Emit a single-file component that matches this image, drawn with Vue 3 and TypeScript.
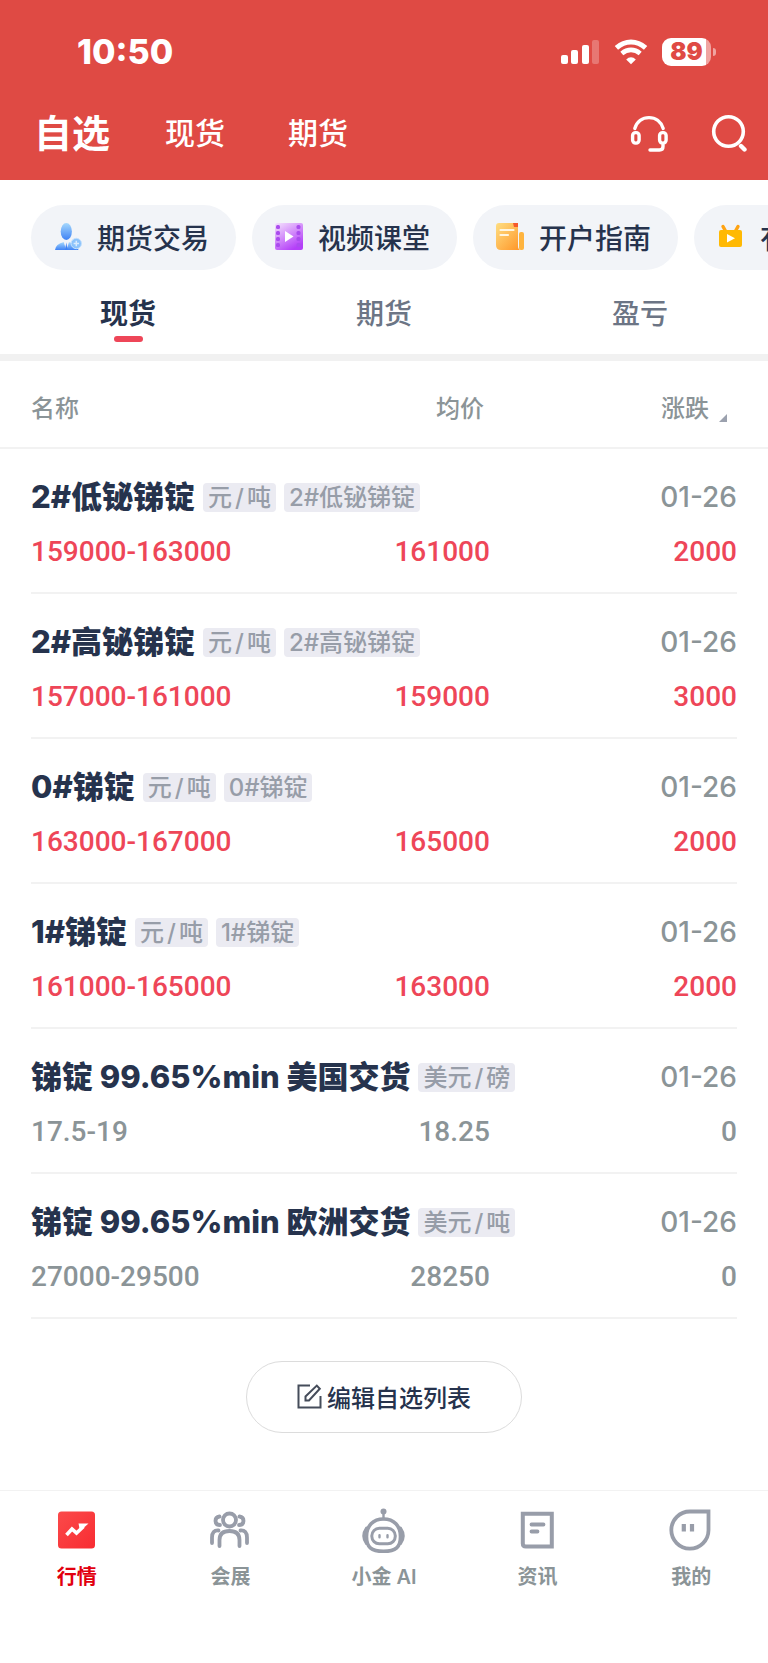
<script setup lang="ts">
import { ref } from 'vue'

interface Quote {
  name: string
  tags: string[][]
  date: string
  range: string
  average: string
  change: string
  up: boolean
}

const sections = ['自选', '现货', '期货']
const section = ref('自选')

const tabs = ['现货', '期货', '盈亏']
const tab = ref('现货')

const chips = [
  { label: '期货交易', icon: 'trade' },
  { label: '视频课堂', icon: 'video' },
  { label: '开户指南', icon: 'guide' },
  { label: '有色直播', icon: 'live' },
]

const quotes: Quote[] = [
  { name: '2#低铋锑锭', tags: [['元', '吨'], ['2#低铋锑锭']], date: '01-26', range: '159000-163000', average: '161000', change: '2000', up: true },
  { name: '2#高铋锑锭', tags: [['元', '吨'], ['2#高铋锑锭']], date: '01-26', range: '157000-161000', average: '159000', change: '3000', up: true },
  { name: '0#锑锭', tags: [['元', '吨'], ['0#锑锭']], date: '01-26', range: '163000-167000', average: '165000', change: '2000', up: true },
  { name: '1#锑锭', tags: [['元', '吨'], ['1#锑锭']], date: '01-26', range: '161000-165000', average: '163000', change: '2000', up: true },
  { name: '锑锭 99.65%min 美国交货', tags: [['美元', '磅']], date: '01-26', range: '17.5-19', average: '18.25', change: '0', up: false },
  { name: '锑锭 99.65%min 欧洲交货', tags: [['美元', '吨']], date: '01-26', range: '27000-29500', average: '28250', change: '0', up: false },
]

const navItems = [
  { label: '行情', icon: 'market' },
  { label: '会展', icon: 'expo' },
  { label: '小金 AI', icon: 'robot' },
  { label: '资讯', icon: 'news' },
  { label: '我的', icon: 'mine' },
]
const current = ref('行情')
</script>

<template>
  <div class="page">
    <header class="top">
      <div class="status">
        <time class="clock">10:50</time>
        <div class="signals">
          <svg width="39" height="26" viewBox="0 0 39 26" fill="#fff" aria-hidden="true">
            <rect x="0" y="16" width="7" height="9" rx="2" />
            <rect x="10" y="11" width="7" height="14" rx="2" />
            <rect x="21" y="6" width="7" height="19" rx="2" />
            <rect x="31" y="1" width="7" height="24" rx="2" opacity=".25" />
          </svg>
          <svg width="34" height="26" viewBox="0 0 34 26" fill="none" stroke="#fff" aria-hidden="true">
            <path d="M2.400 8.900Q9 3 17 3t14.600 5.900" stroke-width="5" />
            <path d="M7.800 14.400Q12 10.900 17 10.900t9.200 3.500" stroke-width="4.600" />
            <path d="M17 25.200 12.200 20.400Q14.400 18.200 17 18.200t4.800 2.200Z" fill="#fff" stroke="none" />
          </svg>
          <span class="battery"><b class="level">89</b></span>
        </div>
      </div>
      <div class="bar">
        <nav class="sections">
          <button v-for="s in sections" :key="s" type="button" :class="{ active: s === section }" @click="section = s">{{ s }}</button>
        </nav>
        <div class="actions">
          <button type="button" aria-label="客服">
            <svg width="38" height="38" viewBox="0 0 38 38" fill="none" stroke="#fff" stroke-width="3.400" stroke-linecap="round" aria-hidden="true">
              <path d="M4.800 14.500C7 7.500 12.500 3.600 19 3.600S31 7.500 33.200 14.500" />
              <rect x="2.600" y="18.600" width="6.500" height="10.500" rx="3" />
              <rect x="29.600" y="18.600" width="6.500" height="10.500" rx="3" />
              <path d="M33 31v1.500q0 3.500-3.500 3.500H20" />
            </svg>
          </button>
          <button type="button" aria-label="搜索">
            <svg width="38" height="38" viewBox="0 0 38 38" fill="none" stroke="#fff" aria-hidden="true">
              <circle cx="17.500" cy="17.500" r="14.800" stroke-width="3.600" />
              <path d="m30 32 3.500 3.500" stroke-width="4.400" stroke-linecap="round" />
            </svg>
          </button>
        </div>
      </div>
    </header>

    <main class="content">
      <div class="chips">
        <button v-for="c in chips" :key="c.label" type="button" class="chip">
          <svg width="30" height="30" viewBox="0 0 30 30" aria-hidden="true">
            <defs>
              <linearGradient id="blue" x1="0" y1="0" x2="0" y2="1"><stop offset="0" stop-color="#a5d8fd" /><stop offset="1" stop-color="#3f82f5" /></linearGradient>
              <linearGradient id="violet" x1="0" y1="0" x2=".6" y2="1"><stop offset="0" stop-color="#f5e3fd" /><stop offset="1" stop-color="#b43ff8" /></linearGradient>
              <linearGradient id="orange" x1="0" y1="0" x2="1" y2="1"><stop offset="0" stop-color="#fede82" /><stop offset="1" stop-color="#ff9425" /></linearGradient>
            </defs>
            <g v-if="c.icon === 'trade'">
              <ellipse cx="12.300" cy="9.500" rx="5.600" ry="8.500" fill="url(#blue)" />
              <path d="M1 28q.5-6 9-8h4.500q9.500 2 10 8Z" fill="url(#blue)" />
              <path d="m9.500 19.500 2.800 8.500 2.900-8.500Z" fill="#f2f3f8" />
              <path d="m12.300 20.500-1.300 7.500h2.600Z" fill="#3f82f5" />
              <circle cx="22.300" cy="21.500" r="5.200" fill="#8cc3fb" stroke="#c4e0fd" />
              <path d="M22.300 18.800v5.400M19.600 21.500H25" stroke="#d8ebfe" stroke-width="1.500" />
            </g>
            <g v-else-if="c.icon === 'video'">
              <rect x="0" y="1" width="28" height="27" rx="2" fill="url(#violet)" />
              <g fill="#aa4cee">
                <rect v-for="n in 4" :key="n" x="1" :y="n * 6 - 3" width="4" height="4" rx="1.500" />
                <rect v-for="n in 4" :key="n + 4" x="21.500" :y="n * 6 - 3" width="4" height="4" rx="1.500" />
              </g>
              <path d="M10 9v11l8.500-5.500Z" fill="#fff" />
            </g>
            <g v-else-if="c.icon === 'guide'">
              <path d="M3 1h19v23q0 4 3 4H5q-5 0-5-5V4q0-3 3-3Z" fill="url(#orange)" />
              <rect x="23" y="10" width="5" height="18" rx="2" fill="#ffb43f" />
              <path d="M17 1h5v4h-4Z" fill="#f5592c" />
              <path d="M4.500 8h13M4.500 13h7.500" stroke="#fff5df" stroke-width="2.200" stroke-linecap="round" />
            </g>
            <g v-else>
              <path d="m8.500 9-2.500-4.500M18.500 9l2.500-4.500" stroke="#ffa312" stroke-width="3.400" stroke-linecap="round" />
              <rect x="2" y="8" width="23" height="17" rx="2" fill="#ffb904" />
              <path d="M10 12v8.500l8-4.200Z" fill="#fff" />
            </g>
          </svg>
          {{ c.label }}
        </button>
      </div>

      <nav class="tabs">
        <button v-for="t in tabs" :key="t" type="button" :class="{ active: t === tab }" @click="tab = t">{{ t }}</button>
      </nav>

      <table class="quotes">
        <thead>
          <tr>
            <th scope="col">名称</th>
            <th scope="col">均价</th>
            <th scope="col">
              <button type="button" class="sort">涨跌
                <svg width="8" height="8" viewBox="0 0 8 8" aria-hidden="true"><path d="M8 0v8H0Z" fill="#9ba1ae" /></svg>
              </button>
            </th>
          </tr>
        </thead>
        <tbody v-for="q in quotes" :key="q.name" :class="{ up: q.up }">
          <tr class="title">
            <th scope="rowgroup" colspan="2">
              <span class="name">{{ q.name }}</span>
              <span v-for="(tag, i) in q.tags" :key="i" class="tag">{{ tag[0] }}<template v-if="tag[1]"><span class="per">/</span>{{ tag[1] }}</template></span>
            </th>
            <td class="date">{{ q.date }}</td>
          </tr>
          <tr class="price">
            <td>{{ q.range }}</td>
            <td>{{ q.average }}</td>
            <td>{{ q.change }}</td>
          </tr>
        </tbody>
      </table>

      <button type="button" class="edit">
        <svg width="25" height="25" viewBox="0 0 25 25" fill="none" stroke="#454c5a" stroke-width="2" aria-hidden="true">
          <path d="M13 1.500H1.500v22h22V12" />
          <path d="M8.500 16.500v-4L19.800 1.600l3 3.200L12 16.500Z" />
        </svg>
        编辑自选列表
      </button>
    </main>

    <nav class="dock">
      <a v-for="n in navItems" :key="n.label" href="#" :class="{ active: n.label === current }" @click.prevent="current = n.label">
        <svg width="48" height="48" viewBox="0 0 48 48" fill="none" stroke="#989da9" stroke-width="3.800" stroke-linecap="round" aria-hidden="true">
          <g v-if="n.icon === 'market'" stroke="none">
            <defs><linearGradient id="red" x1="0" y1="0" x2="1" y2="1"><stop offset="0" stop-color="#fb4a4a" /><stop offset="1" stop-color="#f82c32" /></linearGradient></defs>
            <rect x="5" y="5.500" width="37" height="37" rx="3.500" fill="url(#red)" />
            <path d="m13.500 29 5.500-6 4.500 4 7-6.500" fill="none" stroke="#fff" stroke-width="3.600" stroke-linecap="butt" />
            <path d="M25.500 17.500h10l-8.500 7.500Z" fill="#fff" />
          </g>
          <g v-else-if="n.icon === 'expo'">
            <circle cx="23.500" cy="14" r="6.500" />
            <path d="M13.500 10.500q-4 .5-4 4.500t4.500 4M33.500 10.500q4 .5 4 4.500t-4.500 4" />
            <path d="M13.500 40v-6q0-9 10-9t10 9v6" />
            <path d="M12.500 24.500q-6.500-.5-6.500 7V37M34.500 24.500q6.500-.5 6.500 7V37" />
          </g>
          <g v-else-if="n.icon === 'robot'">
            <circle cx="23.500" cy="5.500" r="3" fill="#989da9" stroke="none" />
            <path d="M23.500 6v7" stroke-width="2.400" />
            <path d="M23.500 13C34 13 40.500 20 40.500 30.500S36 45.300 23.500 45.300 6.500 41 6.500 30.500 13 13 23.500 13Z" stroke-width="3.600" />
            <path d="M6.500 22q-5.500 8 0 15.500ZM40.500 22q5.500 8 0 15.500Z" stroke-width="3" fill="#989da9" stroke-linejoin="round" />
            <rect x="11.800" y="22.300" width="23.500" height="15.500" rx="7.500" stroke-width="3" />
            <path d="M19.500 29.200v2M27.500 29.200v2" stroke-width="2.400" />
          </g>
          <g v-else-if="n.icon === 'news'" stroke-linecap="butt">
            <path d="M8.800 7.800h29v32.800h-26q-3 0-3-3Z" stroke-width="4" />
            <path d="M17.500 18.500h12M17.500 25.500h6" stroke-linecap="round" />
          </g>
          <g v-else stroke-linecap="butt">
            <path d="M23 5.500h18.500v18.800A18.600 18.600 0 1 1 23 5.500Z" />
            <path d="M16.800 18v7.500M25 18v7.500" stroke-width="4.200" />
          </g>
        </svg>
        <span>{{ n.label }}</span>
      </a>
    </nav>
  </div>
</template>

<style>
body {
  margin: 0;
  background: #fff;
}
</style>

<style scoped>
.page {
  min-height: 100vh;
  display: flex;
  flex-direction: column;
  overflow-x: hidden;
  color: #26334d;
  font-family: Inter, "Noto Sans CJK SC", sans-serif;
  -webkit-font-smoothing: antialiased;
}

button {
  margin: 0;
  padding: 0;
  border: 0;
  background: none;
  color: inherit;
  font: inherit;
  cursor: pointer;
}

svg {
  display: block;
  flex: none;
}

.top {
  background: #df4a44;
  color: #fff;
}

.status {
  display: flex;
  justify-content: space-between;
  align-items: center;
  padding: 32px 52px 0 77px;
}

.clock {
  font-size: 34px;
  line-height: 40px;
  font-weight: 800;
}

.signals {
  display: flex;
  align-items: center;
  gap: 14px;
}

.battery {
  position: relative;
  display: flex;
  width: 49px;
  height: 28px;
  margin-right: 5px;
  border-radius: 9px;
  background: linear-gradient(to right, #fff 44px, #f0a4a1 44px);
  color: #df4a44;
}

.battery::after {
  content: "";
  position: absolute;
  right: -5px;
  top: 10px;
  width: 3px;
  height: 8px;
  border-radius: 0 4px 4px 0;
  background: #f0a4a1;
}

.level {
  flex: 1;
  font-size: 24px;
  line-height: 28px;
  font-weight: 900;
  text-align: center;
}

.bar {
  display: flex;
  justify-content: space-between;
  align-items: center;
  height: 108px;
  padding: 14px 19px 0 34px;
  box-sizing: border-box;
}

.sections {
  display: flex;
  align-items: center;
  gap: 55px;
}

.sections button {
  font-size: 30px;
  line-height: 52px;
  font-weight: 500;
  padding-right: 8px;
}

.sections .active {
  font-size: 38px;
  font-weight: 700;
  padding: 0;
}

.actions {
  display: flex;
  gap: 43px;
}

.content {
  display: flex;
  flex-direction: column;
}

.chips {
  display: flex;
  gap: 16px;
  padding: 25px 0 0 31px;
  overflow: hidden;
}

.chip {
  flex: none;
  display: flex;
  align-items: center;
  gap: 13px;
  height: 65px;
  padding: 0 27px 2px 23px;
  border-radius: 33px;
  background: #f2f4f8;
  font-size: 28px;
  font-weight: 500;
}

.tabs {
  display: flex;
  height: 84px;
  border-bottom: 7px solid #f1f1f1;
}

.tabs button {
  position: relative;
  flex: 1;
  font-size: 28px;
  font-weight: 500;
  color: #6c7585;
}

.tabs .active {
  font-weight: 700;
  color: #26334d;
}

.tabs .active::after {
  content: "";
  position: absolute;
  left: 50%;
  bottom: 12px;
  width: 29px;
  height: 6px;
  margin-left: -14px;
  border-radius: 3px;
  background: #ee4658;
}

.quotes,
.quotes thead,
.quotes tbody {
  display: block;
}

.quotes tr {
  display: grid;
  grid-template-columns: minmax(0, 35fr) minmax(0, 30fr) minmax(0, 35fr);
  align-items: center;
}

.quotes th,
.quotes td {
  padding: 0;
  text-align: right;
  white-space: nowrap;
}

.quotes th:first-child,
.quotes td:first-child {
  text-align: left;
}

.quotes thead tr {
  height: 86px;
  padding: 0 31px;
  border-bottom: 2px solid #f2f2f2;
  color: #8b9497;
  font-size: 24px;
}

.quotes thead th {
  padding: 5px 6px 0 0;
  font-weight: 500;
}

.quotes thead th:last-child {
  padding-right: 10px;
}

.sort {
  display: inline-flex;
  align-items: flex-end;
  gap: 10px;
}

.sort svg {
  margin-bottom: 2px;
}

.quotes tbody {
  margin: 0 31px;
  height: 143px;
  border-bottom: 2px solid #f2f2f2;
}

.quotes .title {
  grid-template-columns: 1fr auto;
  height: 66px;
  padding-top: 15px;
}

.title th {
  display: flex;
  align-items: center;
  gap: 8px;
}

.name {
  font-size: 31px;
  line-height: 40px;
  font-weight: 800;
}

.tag {
  padding: 0 5px;
  border-radius: 4px;
  background: #ebebf2;
  color: #979da8;
  font-size: 24px;
  line-height: 29px;
  font-weight: 500;
}

.per {
  margin: 0 3px;
}

.date {
  color: #8b9497;
  font-size: 28px;
  font-weight: 500;
}

.quotes .price {
  height: 42px;
  color: #8b9497;
  font-family: Roboto, sans-serif;
  font-size: 28px;
  font-weight: 500;
}

.quotes .up .price {
  color: #ee4658;
}

.edit {
  display: flex;
  align-self: center;
  align-items: center;
  gap: 5px;
  height: 72px;
  margin: 42px 0 57px;
  padding: 0 50px 2px;
  border: 1px solid #dcdcdc;
  border-radius: 36px;
  font-size: 24px;
  font-weight: 500;
}

.dock {
  display: flex;
  flex: 1;
  border-top: 1px solid #f2f2f2;
}

.dock a {
  flex: 1;
  display: flex;
  flex-direction: column;
  align-items: center;
  gap: 8px;
  padding-top: 15px;
  color: #8b9497;
  font-size: 20px;
  line-height: 30px;
  font-weight: 600;
  text-decoration: none;
}

.dock .active {
  color: #e2000f;
  font-weight: 700;
}
</style>
